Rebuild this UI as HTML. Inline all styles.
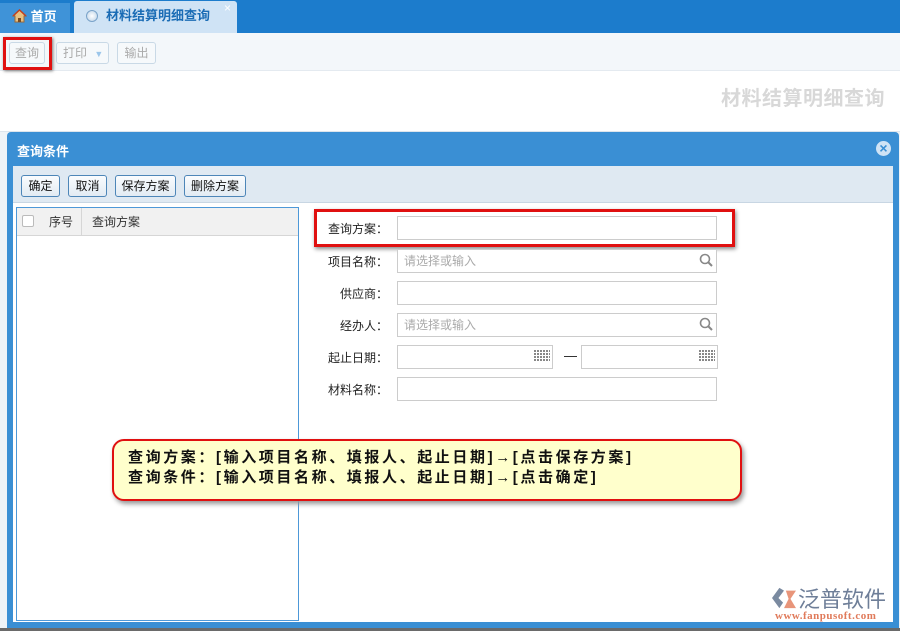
<!DOCTYPE html>
<html><head><meta charset="utf-8"><style>
*{margin:0;padding:0;box-sizing:border-box}
body{width:900px;height:631px;overflow:hidden;background:#fff;font-family:"Liberation Sans","Noto Sans CJK SC",sans-serif;font-size:12px;position:relative;color:#222}
.abs{position:absolute}
.btn{position:absolute;border:1px solid #c9d9e6;border-radius:3px;background:#f6f9fb;color:#aaa;font-size:12px;text-align:center;line-height:20px;height:22px}
.dbtn{position:absolute;top:175px;height:22px;border:1px solid #4d86b8;border-radius:3px;background:linear-gradient(#fafcfe,#e2ebf3);font-size:12px;line-height:20px;text-align:center;color:#111}
.lbl{position:absolute;width:88px;text-align:right;font-size:12px;color:#222}
.inp{position:absolute;height:24px;border:1px solid #ccc;background:#fff;color:#aaa;font-size:12px;line-height:22px;padding-left:6px}
</style></head><body>
<div class="abs" style="left:0;top:0;width:900px;height:33px;background:#1c7ccc"></div>
<div class="abs" style="left:0;top:3px;width:70px;height:30px;background:#3f93d8;color:#fff;font-weight:bold;font-size:13px;line-height:28px;padding-left:12px">
<svg width="15" height="14" style="vertical-align:-2px" viewBox="0 0 15 14"><path d="M1 7L7.5 1L14 7H12V13H3V7Z" fill="#e8c080" stroke="#9a6a3a"/><rect x="6" y="9" width="3" height="4" fill="#7a4a20"/><path d="M1 7L7.5 1L14 7" fill="none" stroke="#c04020" stroke-width="1.5"/></svg> 首页</div>
<div class="abs" style="left:74px;top:1px;width:163px;height:32px;background:#cfe3f5;border-radius:3px 3px 0 0;color:#1a6cb5;font-weight:bold;font-size:13px;line-height:30px;padding-left:32px">材料结算明细查询</div>
<div class="abs" style="left:86px;top:10px;width:12px;height:12px;border-radius:50%;border:1px solid #7aa3c9;background:radial-gradient(#fff,#b9d0e6)"></div>
<div class="abs" style="left:224px;top:1px;color:#fff;font-size:12px">×</div>
<div class="abs" style="left:0;top:33px;width:900px;height:38px;background:#f3f7fa;border-bottom:1px solid #e4eaf0"></div>
<div class="btn" style="left:9px;top:42px;width:36px">查询</div>
<div class="abs" style="left:3px;top:37px;width:49px;height:33px;border:3px solid #e01010;box-shadow:1px 1px 3px #777"></div>
<div class="btn" style="left:56px;top:42px;width:53px;text-align:left;padding-left:6px">打印 <span style="color:#9cc6ea;font-size:9px;margin-left:4px">▼</span></div>
<div class="btn" style="left:117px;top:42px;width:39px">输出</div>
<div class="abs" style="left:721px;top:82px;font-size:20px;font-weight:bold;color:#d8d8d8;letter-spacing:0.5px">材料结算明细查询</div>
<div class="abs" style="left:0;top:131px;width:900px;height:500px;background:#eef3f7;border-top:1px solid #dde5ec"></div>
<div class="abs" style="left:7px;top:132px;width:892px;height:497px;background:#3a8fd4;border-radius:4px 4px 0 0"></div>
<div class="abs" style="left:0;top:628px;width:900px;height:3px;background:#6a6a6a"></div>
<div class="abs" style="left:17px;top:141px;color:#fff;font-weight:bold;font-size:13px">查询条件</div>
<div class="abs" style="left:876px;top:141px;width:15px;height:15px;border-radius:50%;background:#cfe3f5;color:#3a8fd4;font-size:14px;line-height:15px;text-align:center;font-weight:bold">×</div>
<div class="abs" style="left:13px;top:166px;width:880px;height:456px;background:#fff"></div>
<div class="abs" style="left:13px;top:166px;width:880px;height:37px;background:#dfe9f2;border-bottom:1px solid #c8d6e3"></div>
<div class="dbtn" style="left:21px;width:39px">确定</div>
<div class="dbtn" style="left:68px;width:39px">取消</div>
<div class="dbtn" style="left:115px;width:61px">保存方案</div>
<div class="dbtn" style="left:184px;width:62px">删除方案</div>
<div class="abs" style="left:16px;top:207px;width:283px;height:414px;border:1px solid #4d98d8;background:#fff"></div>
<div class="abs" style="left:17px;top:208px;width:281px;height:28px;background:#f1f1f1;border-bottom:1px solid #d6d6d6"></div>
<div class="abs" style="left:22px;top:215px;width:12px;height:12px;border:1px solid #bbb;background:#fff;border-radius:2px"></div>
<div class="abs" style="left:49px;top:213px;font-size:12px;color:#333">序号</div>
<div class="abs" style="left:81px;top:208px;width:1px;height:28px;background:#d6d6d6"></div>
<div class="abs" style="left:92px;top:213px;font-size:12px;color:#333">查询方案</div>
<div class="lbl" style="left:300px;top:220px">查询方案：</div>
<div class="inp" style="left:397px;top:216px;width:320px"></div>
<div class="abs" style="left:314px;top:209px;width:421px;height:38px;border:3px solid #e01010;box-shadow:1px 2px 4px #888"></div>
<div class="lbl" style="left:300px;top:253px">项目名称：</div>
<div class="inp" style="left:397px;top:249px;width:320px">请选择或输入</div>
<svg class="abs" style="left:699px;top:253px" width="14" height="14" viewBox="0 0 14 14"><circle cx="6" cy="6" r="4.5" fill="none" stroke="#888" stroke-width="1.6"/><path d="M9.5 9.5L13 13" stroke="#888" stroke-width="2"/></svg>
<div class="lbl" style="left:300px;top:285px">供应商：</div>
<div class="inp" style="left:397px;top:281px;width:320px"></div>
<div class="lbl" style="left:300px;top:317px">经办人：</div>
<div class="inp" style="left:397px;top:313px;width:320px">请选择或输入</div>
<svg class="abs" style="left:699px;top:317px" width="14" height="14" viewBox="0 0 14 14"><circle cx="6" cy="6" r="4.5" fill="none" stroke="#888" stroke-width="1.6"/><path d="M9.5 9.5L13 13" stroke="#888" stroke-width="2"/></svg>
<div class="lbl" style="left:300px;top:349px">起止日期：</div>
<div class="inp" style="left:397px;top:345px;width:156px"></div>
<div class="inp" style="left:581px;top:345px;width:137px"></div>
<div class="abs" style="left:534px;top:350px;width:16px;height:12px;background:repeating-linear-gradient(90deg,#888 0 2px,transparent 2px 3px);-webkit-mask:repeating-linear-gradient(#000 0 2px,transparent 2px 3px);mask:repeating-linear-gradient(#000 0 2px,transparent 2px 3px)"></div>
<div class="abs" style="left:699px;top:350px;width:16px;height:12px;background:repeating-linear-gradient(90deg,#888 0 2px,transparent 2px 3px);-webkit-mask:repeating-linear-gradient(#000 0 2px,transparent 2px 3px);mask:repeating-linear-gradient(#000 0 2px,transparent 2px 3px)"></div>
<div class="abs" style="left:564px;top:356px;width:13px;height:1px;background:#333"></div>
<div class="lbl" style="left:300px;top:381px">材料名称：</div>
<div class="inp" style="left:397px;top:377px;width:320px"></div>
<div class="abs" style="left:112px;top:439px;width:630px;height:62px;background:#ffffcc;border:2px solid #e01010;border-radius:12px;box-shadow:2px 3px 5px #999;padding:7px 0 0 14px;font-size:15px;font-weight:bold;line-height:20px;color:#111;letter-spacing:2.6px;white-space:nowrap">查询方案：[输入项目名称、填报人、起止日期]→[点击保存方案]<br>查询条件：[输入项目名称、填报人、起止日期]→[点击确定]</div>
<svg class="abs" style="left:770px;top:586px" width="28" height="24" viewBox="0 0 30 26"><path d="M10 2L2 13L10 24L14 18L9 13L15 5Z" fill="#7a8aa0"/><path d="M17 5L28 5L22 14L28 24L15 24L20 14Z" fill="#e8957a"/></svg>
<div class="abs" style="left:798px;top:584px;font-size:22px;color:#6e7e98;font-family:'Noto Sans CJK SC',sans-serif;line-height:28px">泛普软件</div>
<div class="abs" style="left:775px;top:610px;font-size:11px;color:#e07a5a;font-family:'Liberation Serif',serif;font-weight:bold;letter-spacing:0.5px">www.fanpusoft.com</div>
</body></html>
